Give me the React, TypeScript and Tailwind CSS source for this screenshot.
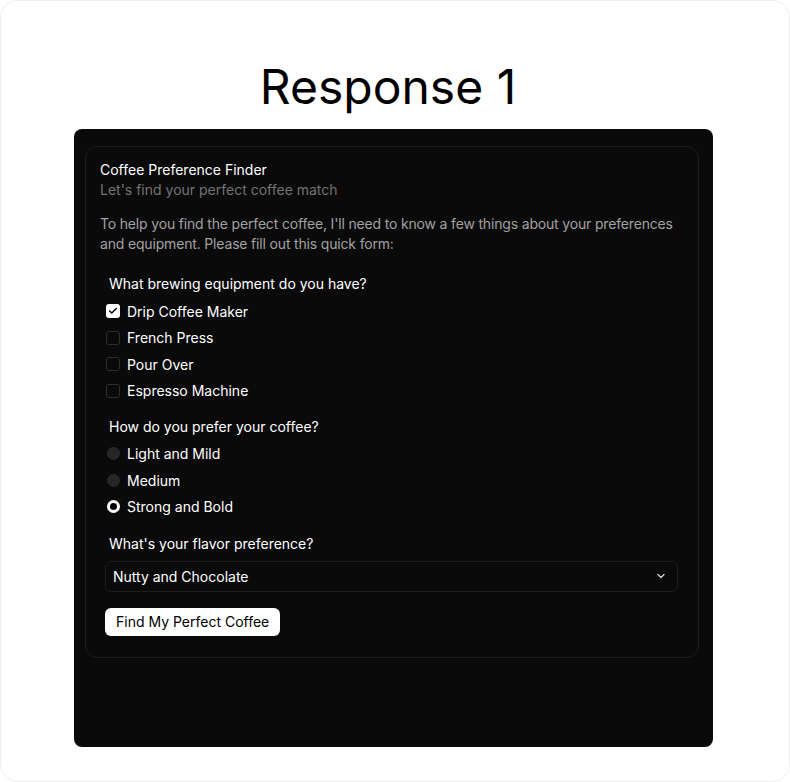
import React from "react";

function Check({ checked }: { checked?: boolean }) {
  if (checked) {
    return (
      <span className="flex h-[14px] w-[14px] items-center justify-center rounded-[3px] bg-white">
        <svg width="10" height="10" viewBox="0 0 24 24" fill="none" stroke="#000" strokeWidth="3.5" strokeLinecap="round" strokeLinejoin="round">
          <path d="M20 6 9 17l-5-5" />
        </svg>
      </span>
    );
  }
  return <span className="h-[14px] w-[14px] rounded-[3px] border border-[#2e2e2e] bg-[#0a0a0a]" />;
}

function Radio({ checked }: { checked?: boolean }) {
  if (checked) {
    return <span className="h-[13px] w-[13px] rounded-full border-[3px] border-white bg-black" />;
  }
  return <span className="h-[13px] w-[13px] rounded-full border border-[#2a2a2a] bg-[#262626]" />;
}

export default function App() {
  const equipment = [
    { label: "Drip Coffee Maker", checked: true },
    { label: "French Press" },
    { label: "Pour Over" },
    { label: "Espresso Machine" },
  ];
  const strengths = [
    { label: "Light and Mild" },
    { label: "Medium" },
    { label: "Strong and Bold", checked: true },
  ];
  return (
    <div
      className="h-[782px] w-[790px] overflow-hidden rounded-[18px] border border-[#eeeeee] bg-white"
      style={{ fontFamily: "Inter, 'Noto Sans', sans-serif" }}
    >
      <h1 className="mt-[62px] pr-[14px] text-center text-[48px] leading-[48px] font-normal text-black">Response 1</h1>
      <div className="ml-[73px] mt-[18px] h-[618px] w-[639px] rounded-[8px] bg-[#0a0a0a] pl-[11px] pr-[14px] pt-[17px]">
        <div className="rounded-[12px] border border-[#1c1c1c] pb-[21px] pl-[14px] pr-[12px] pt-[13px]">
          <div className="text-[14px] leading-[20px] text-white">Coffee Preference Finder</div>
          <div className="text-[14px] leading-[20px] text-[#737373]">Let's find your perfect coffee match</div>
          <p className="mt-[14px] text-[14px] leading-[20px] tracking-[-0.17px] text-[#a1a1a1]">
            To help you find the perfect coffee, I'll need to know a few things about your preferences and equipment. Please fill out this quick form:
          </p>
          <div className="mt-[20px] pl-[5px] pr-[8px]">
            <div className="pl-[4px] text-[14px] leading-[20px] text-white">What brewing equipment do you have?</div>
            <div className="mt-[7px] flex flex-col gap-[6.5px]">
              {equipment.map((e) => (
                <label key={e.label} className="flex h-[20px] items-center gap-[7px] pl-[1px] text-[14px] text-white">
                  <Check checked={e.checked} />
                  <span>{e.label}</span>
                </label>
              ))}
            </div>
            <div className="mt-[16px] pl-[4px] text-[14px] leading-[20px] text-white">How do you prefer your coffee?</div>
            <div className="mt-[7px] flex flex-col gap-[6.5px]">
              {strengths.map((e) => (
                <label key={e.label} className="flex h-[20px] items-center gap-[7px] pl-[2px] text-[14px] text-white">
                  <Radio checked={e.checked} />
                  <span>{e.label}</span>
                </label>
              ))}
            </div>
            <div className="mt-[17px] pl-[4px] text-[14px] leading-[20px] text-white">What's your flavor preference?</div>
            <div className="mt-[7px] flex h-[31px] items-center justify-between rounded-[6px] border border-[#1c1c1c] pl-[7px] pr-[10px] text-[14px] text-white">
              <span>Nutty and Chocolate</span>
              <svg width="12" height="12" viewBox="0 0 24 24" fill="none" stroke="#d4d4d4" strokeWidth="2.5" strokeLinecap="round" strokeLinejoin="round">
                <path d="m6 9 6 6 6-6" />
              </svg>
            </div>
            <button className="mt-[16px] h-[28px] rounded-[6px] bg-white px-[11px] text-[14px] text-black">
              Find My Perfect Coffee
            </button>
          </div>
        </div>
      </div>
    </div>
  );
}
